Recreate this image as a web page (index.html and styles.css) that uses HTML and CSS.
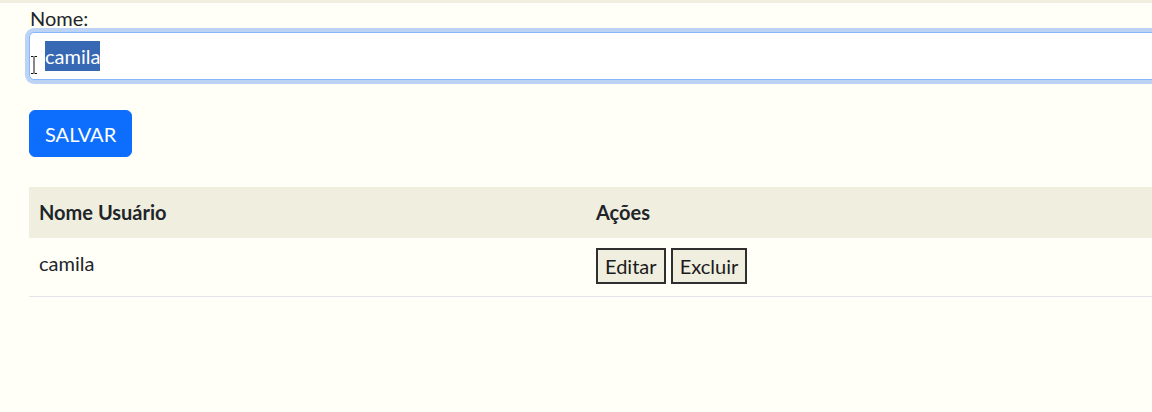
FILE: index.html
```html
<!DOCTYPE html>
<html lang="pt-BR">
<head>
<meta charset="utf-8">
<title>Usuários</title>
<link rel="stylesheet" href="styles.css">
</head>
<body>
<div class="topstrip"></div>
<div class="viewport">
<div class="container">
  <form class="user-form">
    <label class="form-label">Nome:</label>
    <div class="form-control focused">
      <span class="selected">camila</span>
      <svg class="ibeam" width="8" height="18" viewBox="0 0 8 18" aria-hidden="true">
        <path d="M1 0.5h2.5M4.5 0.5H7M4 1v16M1 17.5h2.5M4.5 17.5H7" stroke="#111" stroke-width="1" fill="none"/>
      </svg>
    </div>
    <button type="button" class="btn-primary">SALVAR</button>
  </form>
  <table class="table">
    <thead>
      <tr><th class="col-name">Nome Usuário</th><th>Ações</th></tr>
    </thead>
    <tbody>
      <tr>
        <td>camila</td>
        <td><button type="button" class="btn-plain">Editar</button> <button type="button" class="btn-plain">Excluir</button></td>
      </tr>
    </tbody>
  </table>
</div>
</div>
</body>
</html>
```
FILE: styles.css
```css
html, body {
  margin: 0;
  padding: 0;
  background: #fffff8;
  overflow: hidden;
}
body {
  font-family: "Segoe UI", Lato, "Noto Sans", sans-serif;
  font-size: 20px;
  line-height: 30px;
  color: #212529;
  width: 1152px;
  height: 412px;
}
.topstrip {
  height: 3px;
  background: #f0efdf;
}
.viewport {
  width: 1152px;
  overflow: hidden;
  padding-bottom: 8px;
}
.container {
  margin-left: 29px;
  width: 1200px;
}
.user-form {
  display: flex;
  flex-direction: column;
  align-items: flex-start;
}
.form-label {
  display: block;
  height: 29px;
  padding-left: 1px;
}
.form-control {
  position: relative;
  box-sizing: border-box;
  width: 100%;
  height: 48px;
  border: 1px solid #86b7fe;
  border-radius: 5px;
  background: #ffffff;
  padding: 8px 15px;
  box-shadow: 0 0 0 4px #bcd3f6;
}
.selected {
  background: #3668b4;
  color: #ffffff;
  display: inline-block;
  height: 30px;
}
.ibeam {
  position: absolute;
  left: 0px;
  top: 23px;
}
.btn-primary {
  margin-top: 30px;
  box-sizing: border-box;
  height: 47px;
  padding: 0 15px;
  border: 1px solid #0d6efd;
  border-radius: 6px;
  background: #0d6efd;
  color: #ffffff;
  font-family: inherit;
  font-size: 20px;
  line-height: 30px;
}
.table {
  margin-top: 30px;
  width: 1200px;
  border-collapse: collapse;
}
.table th, .table td {
  text-align: left;
  vertical-align: top;
  padding: 10px 10px;
  line-height: 30px;
}
.table th {
  background: #f0efdf;
  font-weight: 700;
  height: 31px;
}
.table td {
  border-bottom: 1px solid #e4e4ea;
  padding-bottom: 12px;
}
.col-name {
  width: 537px;
}
.btn-plain {
  font-family: inherit;
  font-size: 20px;
  line-height: 30px;
  height: 36px;
  box-sizing: border-box;
  padding: 0 7px;
  border: 2px solid #2f2f2f;
  border-radius: 0;
  background: #efeedf;
  color: #1b1b1b;
  vertical-align: baseline;
}
```
